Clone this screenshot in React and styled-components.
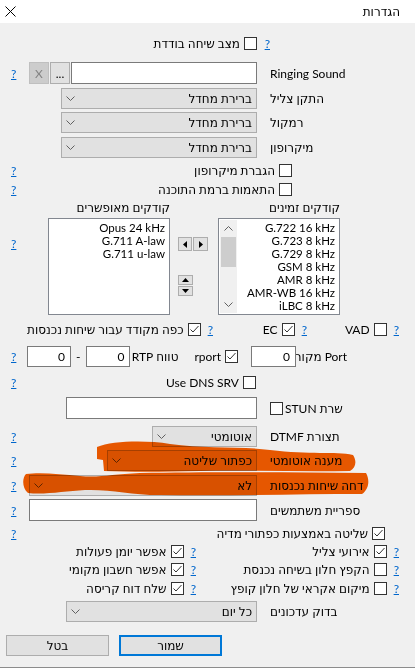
import React from 'react'
import styled, { createGlobalStyle } from 'styled-components'

const GlobalStyle = createGlobalStyle`
  html, body {
    margin: 0;
    padding: 0;
    background: #f0f0f0;
  }
  body {
    font-family: Lato, "DejaVu Sans", "Liberation Sans", sans-serif;
    font-size: 12px;
    color: #000;
  }
  * {
    box-sizing: border-box;
  }
`

const Window = styled.div`
  position: relative;
  width: 415px;
  height: 668px;
  background: #f0f0f0;
  border-bottom: 1px solid #8c8c8c;
  overflow: hidden;
`

const TitleBar = styled.div`
  height: 23px;
  background: #ffffff;
  display: flex;
  align-items: center;
  justify-content: space-between;
  padding: 0 15px 0 5px;
`

const Title = styled.span`
  direction: rtl;
`

const Form = styled.div`
  direction: rtl;
`

const FieldRow = styled.div`
  display: grid;
  grid-template-columns: 145px 13px 228px 18px;
  align-items: center;
  height: ${props => props.$h || 21}px;
  margin-top: ${props => props.$top}px;
`

const Label = styled.span`
  text-align: left;
  white-space: nowrap;
`

const Controls = styled.div`
  display: flex;
  align-items: center;
  gap: 1px;
`

const HelpCell = styled.div`
  text-align: ${props => (props.$start ? 'right' : 'left')};
`

const Help = styled.a`
  color: #0066cc;
  text-decoration: underline;
  cursor: pointer;
  flex: none;
  margin-right: ${props => (props.$push ? 'auto' : '0')};
  margin-top: ${props => props.$top || 0}px;
`

const SelectBox = styled.div`
  width: ${props => props.$w}px;
  height: 21px;
  background: #e1e1e1;
  border: 1px solid #adadad;
  display: flex;
  align-items: center;
  justify-content: space-between;
  padding: 0 4px 0 4px;
  white-space: nowrap;
`

const TextBox = styled.div`
  width: ${props => props.$w}px;
  height: ${props => props.$h || 22}px;
  background: #ffffff;
  border: 1px solid #7a7a7a;
  display: flex;
  align-items: center;
  padding: 0 5px;
  margin-right: ${props => props.$gap || 0}px;
  flex: none;
`

const SmallButton = styled.div`
  width: 20px;
  height: 22px;
  background: ${props => (props.$disabled ? '#cccccc' : '#e1e1e1')};
  border: 1px solid ${props => (props.$disabled ? '#bfbfbf' : '#adadad')};
  color: ${props => (props.$disabled ? '#838383' : '#000')};
  display: flex;
  align-items: center;
  justify-content: center;
  direction: ltr;
`

const Box = styled.span`
  width: 13px;
  height: 13px;
  border: 1px solid #333333;
  background: #ffffff;
  display: inline-flex;
  align-items: center;
  justify-content: center;
  flex: none;
`

const CheckWrap = styled.span`
  display: inline-flex;
  align-items: center;
  flex-direction: ${props => (props.$boxLeft ? 'row-reverse' : 'row')};
  justify-content: ${props => (props.$boxLeft ? 'flex-end' : 'flex-start')};
  gap: ${props => (props.$boxLeft ? 2 : 4)}px;
  margin-right: ${props => props.$gap || 0}px;
  white-space: nowrap;
  flex: none;
`

const CheckLine = styled.div`
  display: flex;
  align-items: center;
  height: 14px;
  margin-top: ${props => props.$top}px;
  padding-right: ${props => props.$inset}px;
  padding-left: 11px;
`

const PairRow = styled.div`
  display: flex;
  align-items: center;
  height: 14px;
  margin-top: ${props => props.$top}px;
  padding-right: 16px;
`

const Group = styled.div`
  display: flex;
  align-items: center;
  width: ${props => (props.$w ? `${props.$w}px` : 'auto')};
  flex: none;
`

const CodecRow = styled.div`
  display: flex;
  align-items: flex-start;
  margin-top: 5px;
  padding-right: 75px;
  padding-left: 11px;
`

const CodecColumn = styled.div`
  width: 122px;
  flex: none;
  margin-right: ${props => props.$gap || 0}px;
`

const CodecHeader = styled.div`
  height: 14px;
  line-height: 14px;
  margin-bottom: 3px;
  white-space: nowrap;
`

const ListBox = styled.div`
  height: 97px;
  background: #ffffff;
  border: 1px solid #828790;
  display: flex;
  overflow: hidden;
`

const ListItems = styled.div`
  flex: 1;
  padding: 2px 4px 0 0;
  white-space: nowrap;
  overflow: hidden;
  font-size: 11.5px;
`

const ListItem = styled.div`
  height: 13px;
  line-height: 13px;
`

const ScrollBar = styled.div`
  width: 17px;
  flex: none;
  background: #f0f0f0;
  margin: 1px;
  display: flex;
  flex-direction: column;
  align-items: center;
`

const ScrollArrow = styled.div`
  height: 17px;
  width: 100%;
  display: flex;
  align-items: center;
  justify-content: center;
`

const ScrollThumb = styled.div`
  width: 15px;
  height: 30px;
  background: #cdcdcd;
`

const ScrollTrack = styled.div`
  flex: 1;
`

const ArrowColumn = styled.div`
  width: 30px;
  flex: none;
  margin-right: 10px;
  padding-top: 36px;
  display: flex;
  flex-direction: column;
`

const ArrowPair = styled.div`
  direction: ltr;
  display: flex;
  gap: 1px;
`

const ArrowStack = styled.div`
  display: flex;
  flex-direction: column;
  gap: 1px;
  margin-top: 24px;
  align-self: flex-end;
`

const ArrowButton = styled.div`
  width: ${props => props.$w}px;
  height: ${props => props.$h}px;
  background: #e1e1e1;
  border: 1px solid #adadad;
  display: flex;
  align-items: center;
  justify-content: center;
`

const PortRow = styled.div`
  display: flex;
  align-items: center;
  height: 21px;
  margin-top: 10px;
  padding-right: 68px;
  padding-left: 11px;
`

const Text = styled.span`
  white-space: nowrap;
  width: ${props => (props.$w ? `${props.$w}px` : 'auto')};
  margin-right: ${props => props.$gap || 0}px;
  flex: none;
`

const NumBox = styled(TextBox)`
  height: 21px;
  justify-content: flex-start;
`

const ButtonRow = styled.div`
  direction: ltr;
  display: flex;
  gap: 10px;
  padding-left: 6px;
  margin-top: 13px;
`

const DialogButton = styled.div`
  width: 103px;
  height: 21px;
  background: #e1e1e1;
  border: ${props => (props.$primary ? '2px solid #0078d7' : '1px solid #adadad')};
  display: flex;
  align-items: center;
  justify-content: center;
  direction: rtl;
`

const Scribble = styled.svg`
  position: absolute;
  top: 0;
  left: 0;
  pointer-events: none;
  mix-blend-mode: multiply;
`

const Chevron = ({ up }) => (
  <svg width="9" height="5" viewBox="0 0 9 5">
    <polyline
      points={up ? '0.5,4.5 4.5,0.5 8.5,4.5' : '0.5,0.5 4.5,4.5 8.5,0.5'}
      fill="none"
      stroke="#606060"
      strokeWidth="1"
    />
  </svg>
)

const Triangle = ({ dir }) => {
  const points = {
    left: '4,0 0,3.5 4,7',
    right: '0,0 4,3.5 0,7',
    up: '0,4 3.5,0 7,4',
    down: '0,0 3.5,4 7,0',
  }[dir]
  const vertical = dir === 'up' || dir === 'down'
  return (
    <svg width={vertical ? 7 : 4} height={vertical ? 4 : 7}>
      <polygon points={points} fill="#000" />
    </svg>
  )
}

const Check = ({ checked, label, boxLeft, gap }) => (
  <CheckWrap $boxLeft={boxLeft} $gap={gap}>
    <Box>
      {checked && (
        <svg width="11" height="11" viewBox="0 0 11 11">
          <polyline points="1.5,5.5 4,8 9.5,2" fill="none" stroke="#333" strokeWidth="1" />
        </svg>
      )}
    </Box>
    {label && <span>{label}</span>}
  </CheckWrap>
)

const Select = ({ width, value }) => (
  <SelectBox $w={width}>
    <span>{value}</span>
    <Chevron />
  </SelectBox>
)

const Field = ({ label, children, help, top, h }) => (
  <FieldRow $top={top} $h={h}>
    <Label>{label}</Label>
    <div />
    <Controls>{children}</Controls>
    <HelpCell>{help && <Help>?</Help>}</HelpCell>
  </FieldRow>
)

const availableCodecs = [
  'G.722 16 kHz',
  'G.723 8 kHz',
  'G.729 8 kHz',
  'GSM 8 kHz',
  'AMR 8 kHz',
  'AMR-WB 16 kHz',
  'iLBC 8 kHz',
]

const enabledCodecs = ['Opus 24 kHz', 'G.711 A-law', 'G.711 u-law']

const pairRows = [
  { top: 4, right: ['אירועי צליל', true], left: ['אפשר יומן פעולות', true] },
  { top: 4, right: ['הקפץ חלון בשיחה נכנסת', false], left: ['אפשר חשבון מקומי', true] },
  { top: 5, right: ['מיקום אקראי של חלון קופץ', false], left: ['שלח דוח קריסה', true] },
]

const App = () => (
  <Window>
    <GlobalStyle />
    <TitleBar>
      <svg width="11" height="11" viewBox="0 0 11 11">
        <line x1="0.5" y1="0.5" x2="10.5" y2="10.5" stroke="#000" strokeWidth="1" />
        <line x1="10.5" y1="0.5" x2="0.5" y2="10.5" stroke="#000" strokeWidth="1" />
      </svg>
      <Title>הגדרות</Title>
    </TitleBar>

    <Form>
      <FieldRow $top={13} $h={14}>
        <div />
        <HelpCell $start>
          <Help>?</Help>
        </HelpCell>
        <Controls>
          <Check label="מצב שיחה בודדת" />
        </Controls>
        <div />
      </FieldRow>

      <Field label="Ringing Sound" help top={12} h={22}>
        <TextBox $w={186} />
        <SmallButton>...</SmallButton>
        <SmallButton $disabled>X</SmallButton>
      </Field>
      <Field label="התקן צליל" top={4}>
        <Select width={196} value="ברירת מחדל" />
      </Field>
      <Field label="רמקול" top={3}>
        <Select width={196} value="ברירת מחדל" />
      </Field>
      <Field label="מיקרופון" top={4}>
        <Select width={196} value="ברירת מחדל" />
      </Field>

      <CheckLine $top={5} $inset={123}>
        <Check label="הגברת מיקרופון" />
        <Help $push>?</Help>
      </CheckLine>
      <CheckLine $top={5} $inset={123}>
        <Check label="התאמות ברמת התוכנה" />
        <Help $push>?</Help>
      </CheckLine>

      <CodecRow>
        <CodecColumn>
          <CodecHeader>קודקים זמינים</CodecHeader>
          <ListBox>
            <ListItems>
              {availableCodecs.map(codec => (
                <ListItem key={codec}>{codec}</ListItem>
              ))}
            </ListItems>
            <ScrollBar>
              <ScrollArrow>
                <Chevron up />
              </ScrollArrow>
              <ScrollThumb />
              <ScrollTrack />
              <ScrollArrow>
                <Chevron />
              </ScrollArrow>
            </ScrollBar>
          </ListBox>
        </CodecColumn>
        <ArrowColumn>
          <ArrowPair>
            <ArrowButton $w={14} $h={14}>
              <Triangle dir="left" />
            </ArrowButton>
            <ArrowButton $w={15} $h={14}>
              <Triangle dir="right" />
            </ArrowButton>
          </ArrowPair>
          <ArrowStack>
            <ArrowButton $w={15} $h={10}>
              <Triangle dir="up" />
            </ArrowButton>
            <ArrowButton $w={15} $h={10}>
              <Triangle dir="down" />
            </ArrowButton>
          </ArrowStack>
        </ArrowColumn>
        <CodecColumn $gap={8}>
          <CodecHeader>קודקים מאופשרים</CodecHeader>
          <ListBox>
            <ListItems>
              {enabledCodecs.map(codec => (
                <ListItem key={codec}>{codec}</ListItem>
              ))}
            </ListItems>
          </ListBox>
        </CodecColumn>
        <Help $push $top={35}>?</Help>
      </CodecRow>

      <PairRow $top={7}>
        <Group $w={92}>
          <Help>?</Help>
          <Check label="VAD" gap={7} />
        </Group>
        <Group $w={94}>
          <Help>?</Help>
          <Check label="EC" checked gap={7} />
        </Group>
        <Group>
          <Help>?</Help>
          <Check label="כפה מקודד עבור שיחות נכנסות" checked gap={7} />
        </Group>
      </PairRow>

      <PortRow>
        <Text $w={48}>Port מקור</Text>
        <NumBox $w={45} $gap={3}>0</NumBox>
        <Check label="rport" checked gap={13} />
        <Text $w={45} $gap={16}>טווח RTP</Text>
        <NumBox $w={44} $gap={3}>0</NumBox>
        <Text $gap={6}>-</Text>
        <NumBox $w={44} $gap={5}>0</NumBox>
        <Help $push>?</Help>
      </PortRow>

      <CheckLine $top={8} $inset={159}>
        <Check label="Use DNS SRV" />
        <Help $push>?</Help>
      </CheckLine>

      <FieldRow $top={8} $h={22}>
        <Label>
          <Check label="שרת STUN" boxLeft />
        </Label>
        <div />
        <Controls>
          <TextBox $w={191} />
        </Controls>
        <div />
      </FieldRow>

      <Field label="תצורת DTMF" help top={7}>
        <Select width={105} value="אוטומטי" />
      </Field>
      <Field label="מענה אוטומטי" help top={3}>
        <Select width={150} value="כפתור שליטה" />
      </Field>
      <Field label="דחה שיחות נכנסות" help top={4}>
        <Select width={228} value="לא" />
      </Field>
      <Field label="ספריית משתמשים" help top={3} h={22}>
        <TextBox $w={228} />
      </Field>

      <CheckLine $top={5} $inset={30}>
        <Check label="שליטה באמצעות כפתורי מדיה" checked />
        <Help $push>?</Help>
      </CheckLine>

      {pairRows.map(row => (
        <PairRow key={row.right[0]} $top={row.top}>
          <Group $w={203}>
            <Help>?</Help>
            <Check label={row.right[0]} checked={row.right[1]} gap={7} />
          </Group>
          <Group>
            <Help>?</Help>
            <Check label={row.left[0]} checked={row.left[1]} gap={7} />
          </Group>
        </PairRow>
      ))}

      <Field label="בדוק עדכונים" top={6}>
        <Select width={191} value="כל יום" />
      </Field>
    </Form>

    <ButtonRow>
      <DialogButton>בטל</DialogButton>
      <DialogButton $primary>שמור</DialogButton>
    </ButtonRow>

    <Scribble width="415" height="668">
      <g fill="rgb(245,92,0)">
        <path d="M97,447 C112,441 145,440 170,444 C205,449 240,446 270,450 C310,455 335,451 353,455 C357,461 356,468 350,471 C300,472 250,470 200,471 C160,472 130,472 104,471 L103,460 L97,459 Z" />
        <path d="M26,474 C40,472 60,474 80,476 C100,478 112,474 140,473 C200,472 280,472 366,473 C370,480 369,489 362,494 C300,494 230,496 160,495 C130,495 110,489 85,490 C65,491 45,495 28,493 C22,488 22,478 26,474 Z" />
      </g>
    </Scribble>
  </Window>
)

export default App
